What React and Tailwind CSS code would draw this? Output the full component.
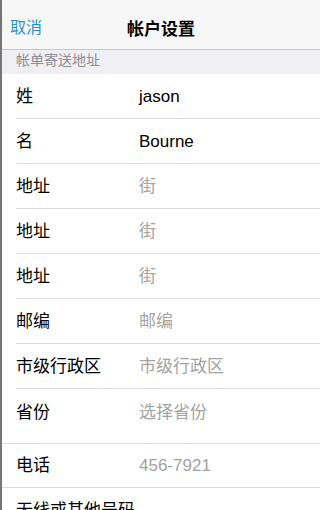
import React from "react";

const font = { fontFamily: '"Liberation Sans", "Noto Sans CJK SC", sans-serif' };

function Row({ label, value, filled, last }) {
  return (
    <div className="flex h-[45px] items-center pl-[14px]">
      <div className={`flex h-full flex-1 items-center pt-[2px] ${last ? "" : "border-b border-[#dcdcdc]"}`}>
        <span className="w-[123px] text-[17px] text-black">{label}</span>
        <span className={`text-[17px] ${filled ? "text-black" : "text-[#a3a3a3]"}`}>{value}</span>
      </div>
    </div>
  );
}

export default function App() {
  return (
    <div className="h-[510px] w-[320px] overflow-hidden border-l-2 border-[#777] bg-white" style={font}>
      <div className="relative flex h-[50px] items-center border-b border-[#c8c8cc] bg-[#f7f7f7] pt-[6px]">
        <span className="pl-2 text-[16px] text-[#2f8fd3]">取消</span>
        <span className="absolute left-1/2 top-[17px] -translate-x-1/2 text-[17px] font-bold text-black">帐户设置</span>
      </div>
      <div className="flex h-[24px] items-center bg-[#efeff4] pb-[4px] pl-[14px] text-[14px] text-[#8e8e93]">
        帐单寄送地址
      </div>
      <Row label="姓" value="jason" filled />
      <Row label="名" value="Bourne" filled />
      <Row label="地址" value="街" />
      <Row label="地址" value="街" />
      <Row label="地址" value="街" />
      <Row label="邮编" value="邮编" />
      <Row label="市级行政区" value="市级行政区" />
      <Row label="省份" value="选择省份" last />
      <div className="h-[10px] border-b border-[#dcdcdc]" />
      <div className="flex h-[44px] items-center border-b border-[#dcdcdc] pl-[14px]">
        <span className="w-[123px] text-[17px] text-black">电话</span>
        <span className="text-[17px] text-[#a3a3a3]">456-7921</span>
      </div>
      <div className="flex h-[45px] items-start pl-[14px] pt-[10px]">
        <span className="text-[17px] text-black">无线或其他号码</span>
      </div>
    </div>
  );
}
